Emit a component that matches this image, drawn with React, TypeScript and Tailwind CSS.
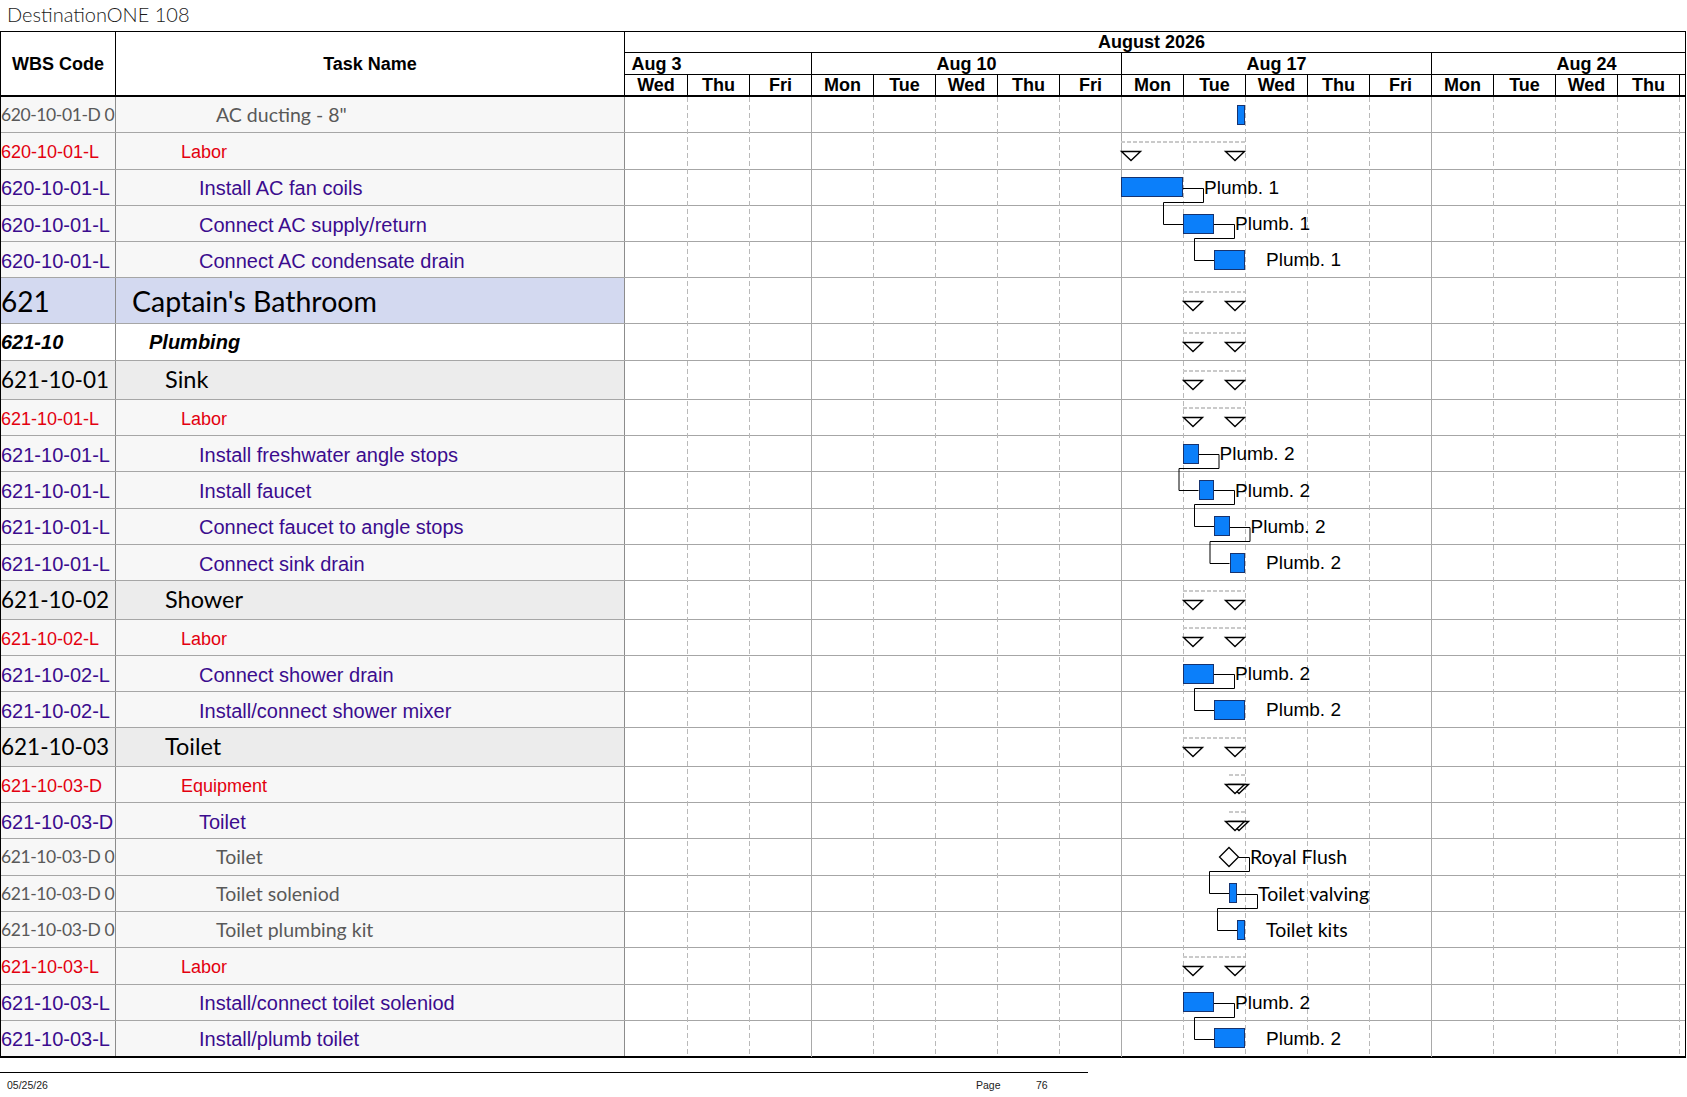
import React from "react";

type Kind = "res" | "labor" | "task" | "l1" | "l2" | "l3";

interface GanttRow {
  wbs: string;
  name: string;
  kind: Kind;
  summary?: [number, number];
  bar?: [number, number];
  milestone?: number;
  label?: string;
  linkTo?: number; // start x of the successor in the next row
}

// one working day = 62px, chart starts on Wed Aug 5
const DAY = 62;
const MON17 = 8 * DAY;
const TUE18 = 9 * DAY;
const WED19 = 10 * DAY;
const Q = DAY / 4;
const HALF = DAY / 2;

const ROW_H: Record<Kind, number> = {
  res: 36.3,
  labor: 36.3,
  task: 36.3,
  l1: 46,
  l2: 37,
  l3: 38.3,
};

const KIND_STYLE: Record<Kind, { cell: string; wbs: string; name: string }> = {
  res: {
    cell: "bg-[#f7f7f7]",
    wbs: "font-['Lato',sans-serif] text-[17.5px] tracking-[-0.4px] text-[#595959]",
    name: "pl-[100px] font-['Lato',sans-serif] text-[19.5px] text-[#595959]",
  },
  labor: {
    cell: "bg-[#f7f7f7]",
    wbs: "pt-[3px] font-['Liberation_Sans',Arial,sans-serif] text-[18px] text-[#e3000f]",
    name: "pl-[65px] pt-[3px] font-['Liberation_Sans',Arial,sans-serif] text-[18px] text-[#e3000f]",
  },
  task: {
    cell: "bg-[#f7f7f7]",
    wbs: "pt-[2px] font-['Liberation_Sans',Arial,sans-serif] text-[20px] text-[#3b0c8e]",
    name: "pl-[83px] pt-[2px] font-['Liberation_Sans',Arial,sans-serif] text-[20px] text-[#3b0c8e]",
  },
  l1: {
    cell: "bg-[#d3d9f0]",
    wbs: "font-['Lato',sans-serif] text-[28px] text-black",
    name: "pl-[16px] font-['Lato',sans-serif] text-[28.5px] text-black",
  },
  l2: {
    cell: "bg-white",
    wbs: "font-['Liberation_Sans',Arial,sans-serif] text-[20px] font-bold italic text-black",
    name: "pl-[33px] font-['Liberation_Sans',Arial,sans-serif] text-[20px] font-bold italic text-black",
  },
  l3: {
    cell: "bg-[#ececec]",
    wbs: "font-['Lato',sans-serif] text-[22.5px] text-black",
    name: "pl-[49px] font-['Lato',sans-serif] text-[23.5px] text-black",
  },
};

const rows: GanttRow[] = [
  { wbs: "620-10-01-D 0", name: 'AC ducting - 8"', kind: "res", bar: [WED19 - 8, WED19] },
  { wbs: "620-10-01-L", name: "Labor", kind: "labor", summary: [MON17, WED19] },
  { wbs: "620-10-01-L", name: "Install AC fan coils", kind: "task", bar: [MON17, TUE18], label: "Plumb. 1", linkTo: TUE18 },
  { wbs: "620-10-01-L", name: "Connect AC supply/return", kind: "task", bar: [TUE18, TUE18 + HALF], label: "Plumb. 1", linkTo: TUE18 + HALF },
  { wbs: "620-10-01-L", name: "Connect AC condensate drain", kind: "task", bar: [TUE18 + HALF, WED19], label: "Plumb. 1" },
  { wbs: "621", name: "Captain's Bathroom", kind: "l1", summary: [TUE18, WED19] },
  { wbs: "621-10", name: "Plumbing", kind: "l2", summary: [TUE18, WED19] },
  { wbs: "621-10-01", name: "Sink", kind: "l3", summary: [TUE18, WED19] },
  { wbs: "621-10-01-L", name: "Labor", kind: "labor", summary: [TUE18, WED19] },
  { wbs: "621-10-01-L", name: "Install freshwater angle stops", kind: "task", bar: [TUE18, TUE18 + Q], label: "Plumb. 2", linkTo: TUE18 + Q },
  { wbs: "621-10-01-L", name: "Install faucet", kind: "task", bar: [TUE18 + Q, TUE18 + 2 * Q], label: "Plumb. 2", linkTo: TUE18 + 2 * Q },
  { wbs: "621-10-01-L", name: "Connect faucet to angle stops", kind: "task", bar: [TUE18 + 2 * Q, TUE18 + 3 * Q], label: "Plumb. 2", linkTo: TUE18 + 3 * Q },
  { wbs: "621-10-01-L", name: "Connect sink drain", kind: "task", bar: [TUE18 + 3 * Q, WED19], label: "Plumb. 2" },
  { wbs: "621-10-02", name: "Shower", kind: "l3", summary: [TUE18, WED19] },
  { wbs: "621-10-02-L", name: "Labor", kind: "labor", summary: [TUE18, WED19] },
  { wbs: "621-10-02-L", name: "Connect shower drain", kind: "task", bar: [TUE18, TUE18 + HALF], label: "Plumb. 2", linkTo: TUE18 + HALF },
  { wbs: "621-10-02-L", name: "Install/connect shower mixer", kind: "task", bar: [TUE18 + HALF, WED19], label: "Plumb. 2" },
  { wbs: "621-10-03", name: "Toilet", kind: "l3", summary: [TUE18, WED19] },
  { wbs: "621-10-03-D", name: "Equipment", kind: "labor", summary: [604, WED19] },
  { wbs: "621-10-03-D", name: "Toilet", kind: "task", summary: [604, WED19] },
  { wbs: "621-10-03-D 0", name: "Toilet", kind: "res", milestone: 604, label: "Royal Flush", linkTo: 604 },
  { wbs: "621-10-03-D 0", name: "Toilet soleniod", kind: "res", bar: [604, 612], label: "Toilet valving", linkTo: 612 },
  { wbs: "621-10-03-D 0", name: "Toilet plumbing kit", kind: "res", bar: [612, WED19], label: "Toilet kits" },
  { wbs: "621-10-03-L", name: "Labor", kind: "labor", summary: [TUE18, WED19] },
  { wbs: "621-10-03-L", name: "Install/connect toilet soleniod", kind: "task", bar: [TUE18, TUE18 + HALF], label: "Plumb. 2", linkTo: TUE18 + HALF },
  { wbs: "621-10-03-L", name: "Install/plumb toilet", kind: "task", bar: [TUE18 + HALF, WED19], label: "Plumb. 2" },
];

// the last column is a sliver of Friday, its label falls outside the chart
const days = ["Wed", "Thu", "Fri", "Mon", "Tue", "Wed", "Thu", "Fri", "Mon", "Tue", "Wed", "Thu", "Fri", "Mon", "Tue", "Wed", "Thu", ""];
const weeks = ["Aug 3", "Aug 10", "Aug 17", "Aug 24"];

const ChartCell: React.FC<{ row: GanttRow; h: number; nextH: number }> = ({ row, h, nextH }) => {
  const mid = (h - 1) / 2;
  const end = row.bar ? row.bar[1] : row.milestone;
  const visualEnd = row.bar ? row.bar[1] : (row.milestone ?? 0) + 9.5;

  return (
    <div className="relative h-full w-[1060px] shrink-0">
      {row.summary && (
        <svg className="absolute left-0 overflow-visible" width={1} height={1} style={{ top: mid - 10 }}>
          <line x1={row.summary[0]} x2={row.summary[1]} y1={1} y2={1} stroke="#cacaca" strokeWidth={2} strokeDasharray="4 2" />
          <polygon
            points={`${row.summary[0] + 0.5},10.5 ${row.summary[0] + 19.5},10.5 ${row.summary[0] + 10},19.5`}
            fill="white"
            stroke="black"
            strokeWidth={1.4}
          />
          <polygon
            points={`${row.summary[1] - 19.5},10.5 ${row.summary[1] - 0.5},10.5 ${row.summary[1] - 10},19.5`}
            fill="white"
            stroke="black"
            strokeWidth={1.4}
          />
        </svg>
      )}

      {row.linkTo !== undefined && end !== undefined && (
        <svg className="absolute left-0 top-0 overflow-visible" width={1} height={1}>
          <path
            d={`M${visualEnd} ${Math.round(mid) + 0.5} H${end + 20.5} V${Math.round(mid + 14) + 0.5} H${row.linkTo - 19.5} V${Math.round(h + (nextH - 1) / 2) + 0.5} H${row.linkTo}`}
            fill="none"
            stroke="black"
            strokeWidth={1}
          />
        </svg>
      )}

      {row.bar && (
        <div
          className="absolute h-[20px] border border-[#17336f] bg-[#0b7ffa]"
          style={{ left: row.bar[0], width: row.bar[1] - row.bar[0], top: mid - 10 }}
        />
      )}

      {row.milestone !== undefined && (
        <svg className="absolute left-0 overflow-visible" width={1} height={1} style={{ top: mid }}>
          <polygon
            points={`${row.milestone},-9.5 ${row.milestone + 9.5},0 ${row.milestone},9.5 ${row.milestone - 9.5},0`}
            fill="white"
            stroke="black"
            strokeWidth={1.3}
          />
        </svg>
      )}

      {row.label && end !== undefined && (
        <div
          className={
            row.kind === "res"
              ? "absolute flex h-[20px] items-center whitespace-nowrap font-['Lato',sans-serif] text-[19.5px] leading-none text-black"
              : "absolute flex h-[20px] items-center whitespace-nowrap font-['Liberation_Sans',Arial,sans-serif] text-[19px] leading-none text-black"
          }
          style={{ left: end + 21, top: mid - 10 }}>
          {row.label}
        </div>
      )}
    </div>
  );
};

const GridLines: React.FC = () => (
  <svg className="pointer-events-none absolute left-[624px] top-0 h-full w-[1060px]">
    {Array.from({ length: 17 }, (_, i) => i + 1).map((i) => {
      const weekEdge = i === 3 || i === 8 || i === 13;
      return (
        <line
          key={i}
          x1={i * DAY + 0.5}
          x2={i * DAY + 0.5}
          y1={0}
          y2="100%"
          stroke={weekEdge ? "#a9a9a9" : "#b9b9b9"}
          strokeWidth={1}
          strokeDasharray={weekEdge ? undefined : "5 3"}
        />
      );
    })}
  </svg>
);

const App: React.FC = () => {
  return (
    <div className="h-[1097px] w-[1687px] overflow-hidden bg-white text-black">
      {/* Title */}
      <div className="h-[31px] pl-[7px] pt-[4px] font-['Lato',sans-serif] text-[20px] font-light leading-[20px] text-[#1a1a1a]">
        DestinationONE 108
      </div>

      <div className="w-[1686px] border-l border-r border-t border-black">
        {/* Header */}
        <div className="flex h-[65px] border-b-2 border-black font-['Liberation_Sans',Arial,sans-serif] text-[18px] font-bold leading-none">
          <div className="flex w-[115px] shrink-0 items-center justify-center border-r border-black">WBS Code</div>
          <div className="flex w-[509px] shrink-0 items-center justify-center border-r border-black">Task Name</div>
          <div className="flex w-[1060px] shrink-0 flex-col">
            <div className="flex h-[21px] items-center justify-center border-b border-black pr-[7px]">August 2026</div>
            <div className="h-[22px] overflow-hidden border-b border-black">
              <div className="-ml-[124px] flex h-full">
                {weeks.map((w) => (
                  <div key={w} className="flex h-full w-[310px] shrink-0 items-center justify-center border-l border-black">
                    {w}
                  </div>
                ))}
              </div>
            </div>
            <div className="flex h-[20px] overflow-hidden">
              {days.map((d, i) => (
                <div
                  key={i}
                  className={
                    i === 0
                      ? "flex h-full w-[62px] shrink-0 items-center justify-center"
                      : "flex h-full w-[62px] shrink-0 items-center justify-center border-l border-black"
                  }>
                  {d}
                </div>
              ))}
            </div>
          </div>
        </div>

        {/* Body */}
        <div className="relative border-b border-black">
          <GridLines />
          {rows.map((row, i) => {
            const h = ROW_H[row.kind];
            const nextH = i < rows.length - 1 ? ROW_H[rows[i + 1].kind] : h;
            const st = KIND_STYLE[row.kind];
            return (
              <div
                key={i}
                className="flex border-b border-[#a6a6a6] last:border-black"
                style={{ height: h }}>
                <div className={`flex w-[115px] shrink-0 items-center overflow-hidden whitespace-nowrap border-r border-[#8c8c8c] leading-none ${st.cell}`}>
                  <span className={st.wbs}>{row.wbs}</span>
                </div>
                <div className={`flex w-[509px] shrink-0 items-center overflow-hidden whitespace-nowrap border-r border-[#8c8c8c] leading-none ${st.cell}`}>
                  <span className={st.name}>{row.name}</span>
                </div>
                <ChartCell row={row} h={h} nextH={nextH} />
              </div>
            );
          })}
        </div>
      </div>

      {/* Footer */}
      <div className="mt-[14px] h-px w-[1088px] bg-black" />
      <div className="mt-[6px] flex h-[12px] font-['Liberation_Sans',Arial,sans-serif] text-[10.5px] leading-[12px] text-[#222]">
        <div className="w-[976px] shrink-0 pl-[7px]">05/25/26</div>
        <div className="w-[60px] shrink-0">Page</div>
        <div>76</div>
      </div>
    </div>
  );
};

export default App;
